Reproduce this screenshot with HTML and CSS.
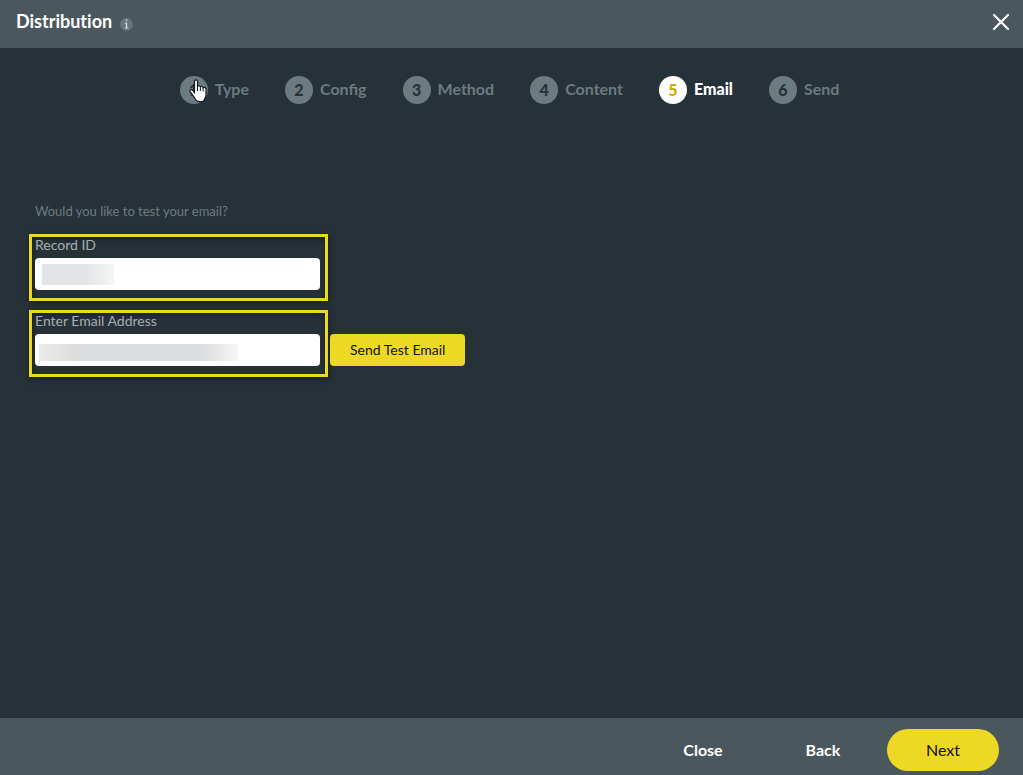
FILE: index.html
```html
<!DOCTYPE html>
<html lang="en">
<head>
<meta charset="utf-8">
<title>Distribution</title>
<link rel="stylesheet" href="styles.css">
</head>
<body>
<div class="dialog">
  <header class="dialog-header">
    <h1 class="title">Distribution</h1>
    <svg class="info" viewBox="0 0 13 13" aria-hidden="true">
      <circle cx="6.5" cy="6.5" r="6.500" fill="#66757a"/>
      <path d="M5.700 1.500h1.600v1.600H5.700zM4.800 4.500h2.400v5h1.200v.9H4.700v-.9h1.200V5.400H4.800z" fill="#d5dadb"/>
    </svg>
    <button class="dismiss" type="button" aria-label="Close dialog">
      <svg viewBox="0 0 18 18" aria-hidden="true"><path d="M2 2l14 14M16 2L2 16" stroke="#fff" stroke-width="2.2" stroke-linecap="round"/></svg>
    </button>
  </header>
  <main class="content">
    <ol class="steps">
      <li class="step"><span class="number">1</span>Type
        <svg class="pointer" viewBox="0 0 18 24" aria-hidden="true"><path d="M5.5 14V2.500c0-2.300 3-2.300 3 0V7.500c.6-1.200 2.700-1 2.900.5.7-1 2.500-.7 2.700.8.9-.8 2.900-.3 2.900 1.300V16c0 2-1.200 3-1.500 4.600-.8 2.800-7.200 2.900-8.500.4-.7-1.600-2.100-3-3.200-4.800C3 14.400.7 12.700.7 11.600c.3-1.500 2.200-1.200 3.200-.1z" fill="#fff" stroke="#10151c" stroke-width="1.200" stroke-linejoin="round"/><path d="M8.500 7.500V12M11.400 8V12M14.100 9V12.500" stroke="#10151c" fill="none"/></svg>
      </li>
      <li class="step"><span class="number">2</span>Config</li>
      <li class="step"><span class="number">3</span>Method</li>
      <li class="step"><span class="number">4</span>Content</li>
      <li class="step current" aria-current="step"><span class="number">5</span>Email</li>
      <li class="step"><span class="number">6</span>Send</li>
    </ol>
    <form class="test-form">
      <p class="question">Would you like to test your email?</p>
      <div class="field">
        <label class="label" for="record">Record ID</label>
        <input class="input masked-record" id="record" type="text">
      </div>
      <div class="row">
        <div class="field">
          <label class="label" for="email">Enter Email Address</label>
          <input class="input masked-email" id="email" type="email">
        </div>
        <button class="send-test" type="button">Send Test Email</button>
      </div>
    </form>
  </main>
  <footer class="dialog-footer">
    <button class="action" type="button">Close</button>
    <button class="action" type="button">Back</button>
    <button class="action primary" type="button">Next</button>
  </footer>
</div>
</body>
</html>
```
FILE: styles.css
```css
* {
  box-sizing: border-box;
}

body {
  margin: 0;
  background: #273238;
  font-family: Lato, "Liberation Sans", sans-serif;
}

button {
  border: 0;
  font-family: inherit;
  cursor: pointer;
}

.dialog {
  display: flex;
  flex-direction: column;
  min-height: 100vh;
}

.dialog-header {
  display: flex;
  align-items: center;
  gap: 8px;
  height: 48px;
  padding: 0 13px 0 16px;
  background: #4a585e;
}

.title {
  margin: 0;
  padding-bottom: 6px;
  color: #fff;
  font-size: 18px;
  line-height: 24px;
  font-variant-ligatures: none;
}

.info {
  width: 13px;
  height: 13px;
}

.dismiss {
  display: flex;
  margin-left: auto;
  padding: 0 0 4px;
  background: none;
}

.dismiss svg {
  width: 18px;
  height: 18px;
}

.content {
  flex: 1;
}

.steps {
  display: flex;
  justify-content: center;
  gap: 36px;
  margin: 0;
  padding: 28px 4px 0 0;
  list-style: none;
}

.step {
  position: relative;
  display: flex;
  align-items: center;
  gap: 7px;
  color: #6c7b80;
  font-size: 16px;
  font-weight: 700;
  line-height: 26px;
  height: 28px;
  padding-bottom: 2px;
}

.number {
  width: 28px;
  height: 28px;
  margin-bottom: -2px;
  border-radius: 50%;
  background: #6c7b80;
  color: #273238;
  font-weight: 900;
  line-height: 28px;
  text-align: center;
}

.current {
  color: #fff;
  font-weight: 900;
}

.current .number {
  background: #fff;
  color: #d0ac00;
}

.pointer {
  position: absolute;
  top: 3px;
  left: 9px;
  width: 18px;
  height: 24px;
}

.test-form {
  display: flex;
  flex-direction: column;
  align-items: flex-start;
  gap: 9px;
  padding: 97px 29px 0;
}

.question {
  margin: 0 0 4px 6px;
  color: #6c7b80;
  font-size: 13px;
  line-height: 20px;
}

.field {
  width: 299px;
  padding: 0 5px 8px 3px;
  border: 3px solid #edd824;
  box-shadow: 1px 2px 6px #181f24, inset 1px 2px 6px #181f24;
}

.label {
  display: block;
  height: 21px;
  color: #a9acae;
  font-size: 14px;
  line-height: 15px;
}

.input {
  display: block;
  width: 100%;
  height: 32px;
  padding: 0 8px;
  border: 0;
  border-radius: 4px;
  background-color: #fff;
  background-repeat: no-repeat;
  font: 14px Lato, "Liberation Sans", sans-serif;
}

.masked-record {
  background-image: linear-gradient(90deg, #e2e4e5, #e2e4e6 60%, #f5f6f6);
  background-position: 7px 6px;
  background-size: 72px 21px;
}

.masked-email {
  background-image: linear-gradient(90deg, #ebebec, #dcddde 18%, #dcddde 82%, #f6f6f6);
  background-position: 4px 10px;
  background-size: 199px 17px;
}

.row {
  display: flex;
  align-items: flex-end;
  gap: 2px;
}

.send-test {
  height: 32px;
  margin-bottom: 11px;
  padding: 0 20px 2px;
  border-radius: 4px;
  background: #edd824;
  color: #111;
  font-size: 14px;
}

.dialog-footer {
  display: flex;
  justify-content: flex-end;
  gap: 8px;
  padding: 11px 24px 4px;
  background: #4a585e;
}

.action {
  width: 112px;
  height: 42px;
  padding: 0 0 2px;
  border-radius: 21px;
  background: none;
  color: #fff;
  font-size: 16px;
  font-weight: 700;
}

.primary {
  background: #edd824;
  color: #111;
  font-weight: 400;
}
```
